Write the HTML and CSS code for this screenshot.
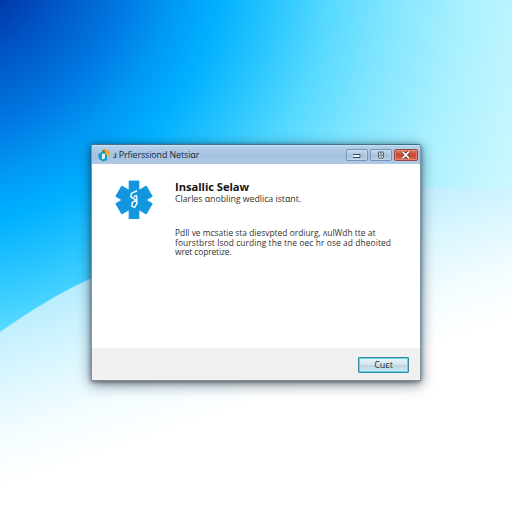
FILE: index.html
```html
<!DOCTYPE html>
<html lang="en">
<head>
<meta charset="utf-8">
<title>Professional Netstar</title>
<link rel="stylesheet" href="styles.css">
</head>
<body>
<svg class="wallpaper" viewBox="0 0 512 512" aria-hidden="true">
  <defs>
    <radialGradient id="sky" gradientUnits="userSpaceOnUse" cx="-60" cy="-60" r="620">
      <stop offset=".137" stop-color="#0038a8"/>
      <stop offset=".21" stop-color="#0055c6"/>
      <stop offset=".3" stop-color="#0074de"/>
      <stop offset=".39" stop-color="#0099f6"/>
      <stop offset=".46" stop-color="#00b0ff"/>
      <stop offset=".55" stop-color="#2ac6ff"/>
      <stop offset=".63" stop-color="#54d8ff"/>
      <stop offset=".73" stop-color="#80e5ff"/>
      <stop offset=".85" stop-color="#a9f0ff"/>
      <stop offset="1" stop-color="#ccf8ff"/>
    </radialGradient>
    <linearGradient id="wave" gradientUnits="userSpaceOnUse" x1="200" y1="238" x2="255" y2="405">
      <stop offset="0" stop-color="#b4ebfd"/>
      <stop offset=".35" stop-color="#d5f5ff"/>
      <stop offset=".7" stop-color="#f2fcff"/>
      <stop offset="1" stop-color="#fff"/>
    </linearGradient>
  </defs>
  <rect width="512" height="512" fill="url(#sky)"/>
  <path d="M0 332C30 311 60 292 92 278C210 215 320 187 420 187L512 188V512H0Z" fill="url(#wave)"/>
</svg>

<main class="window">
  <header class="titlebar">
    <svg class="app-icon" viewBox="0 0 12 13">
      <path d="M2 4L6 2L9 5V11L5 12.5L1 10L0 6Z" fill="#159bc5"/>
      <path d="M4 4.5L7 5V9.5L4 10.5Z" fill="#d5f8fb"/>
      <path d="M4 2L7 0L11.5 2L11 7L8 6L7 3Z" fill="#f4a52d"/>
      <path d="M4 2L6 .5L7 3L5 4Z" fill="#5c7550"/>
    </svg>
    <span class="title">ɹ Prfierssiond Netsiɑr</span>
    <div class="controls">
      <span class="control"><svg viewBox="0 0 20 10"><path d="M6.5 4.5H13.5V7.5H6.5Z" fill="#eef7ff"/><path d="M6 4.5H13V7.5M6 7.5H13" stroke="#3c4b5c" fill="none"/></svg></span>
      <span class="control"><svg viewBox="0 0 20 10"><path d="M7.5 2H12.5V8H7.5ZM10 2V8M7.5 5H12.5" stroke="#35404d" stroke-dasharray="2 .8" fill="#eef7ff"/></svg></span>
      <span class="control close"><svg viewBox="0 0 22 10"><path d="M7.5 1.7L14 8.3M14 1.7L7.5 8.3" stroke="#602c2b" stroke-width="3.2"/><path d="M7.5 1.7L14 8.3M14 1.7L7.5 8.3" stroke="#fff" stroke-width="1.7"/></svg></span>
    </div>
  </header>
  <section class="content">
    <svg class="medical" viewBox="0 0 40 40">
      <g fill="#1296de">
        <rect x="14.7" y=".6" width="10.6" height="38.4"/>
        <rect x="13.6" y="2" width="12.8" height="36" transform="rotate(60 20 20)"/>
        <rect x="13.6" y="2" width="12.8" height="36" transform="rotate(-60 20 20)"/>
      </g>
      <path d="M23 10.8L17.4 13.4L16.8 16.8L22.8 20.3L23 23.4L20.6 27.4L18 26.4L18.2 22.6L23 19.6L22.4 15.6L19.6 16.6" fill="none" stroke="#effbff" stroke-width="1.5" stroke-linejoin="round"/>
    </svg>
    <div class="copy">
      <h1>Insallic Selaw</h1>
      <p class="subtitle">Clarles ɑnobling wedlica istɑnt.</p>
      <p class="details">
        <span class="line first">Pdll ve mcsatie sta diesvpted ordiurg, ʌulWdh tte at</span>
        <span class="line second">fourstbrst lsod curding the tne oec hr ose ad dheoited</span>
        <span class="line third">wret copretize.</span>
      </p>
    </div>
  </section>
  <footer class="footer"><button>Cuɛt</button></footer>
</main>
</body>
</html>
```
FILE: styles.css
```css
* { box-sizing: border-box; }
body {
  margin: 0;
  height: 512px;
  overflow: hidden;
  display: grid;
  padding: 144px 0 0 91px;
  align-items: start;
  font-family: "Open Sans", "Noto Sans", "DejaVu Sans", sans-serif;
  color: #333;
}
.wallpaper {
  position: absolute;
  inset: 0;
  z-index: -1;
  width: 512px;
  height: 512px;
}
.window {
  width: 330px;
  height: 237px;
  display: flex;
  flex-direction: column;
  border: 1px solid #7897a9;
  border-top-color: #42718b;
  border-bottom-color: #8b8b8b;
  border-radius: 3px 3px 1px 1px;
  background: #fff;
  box-shadow: 0 1px 4px #25303e99, 0 3px 14px #18283a99;
}
.titlebar {
  height: 19px;
  display: flex;
  align-items: center;
  padding: 1px 2px 0 6px;
  gap: 3px;
  border-radius: 2px 2px 0 0;
  background: linear-gradient(#b8d3eb, #a4c1e0 50%, #b0cae5);
  box-shadow: inset 0 1px #c7e1f1;
}
.app-icon { width: 12px; height: 13px; flex: none; }
.title {
  font-size: 8.9px;
  line-height: 16px;
  letter-spacing: -.1px;
  white-space: nowrap;
  color: #17283c;
}
.controls { display: flex; gap: 2px; margin-left: auto; }
.control {
  width: 22px;
  height: 12px;
  border: 1px solid #7894b4;
  border-radius: 2px;
  background: linear-gradient(#c6dcef, #a7c0dc 55%, #b6cfe6);
  box-shadow: inset 0 0 0 1px #d1e5f266;
}
.control svg { display: block; width: 100%; height: 10px; }
.close {
  width: 24px;
  border-color: #964747;
  background: linear-gradient(#e17b60, #c9442d 50%, #df6e55);
  box-shadow: inset 0 0 0 1px #f1a18a88;
}
.content { flex: 1; display: flex; padding: 16px 20px 0 22px; gap: 21px; }
.medical { width: 40px; height: 40px; flex: none; }
.copy { min-width: 0; padding-top: 0; }
h1 {
  margin: 0;
  font-size: 11.2px;
  line-height: 14px;
  color: #151515;
  letter-spacing: -.05px;
}
p { margin: 0; }
.subtitle { font-size: 8.8px; line-height: 10px; letter-spacing: -.03px; white-space: nowrap; }
.details { margin-top: 24px; font-size: 8.4px; line-height: 9.5px; color: #303030; }
.line { display: block; white-space: nowrap; }
.first { letter-spacing: .02px; }
.second { letter-spacing: .1px; }
.third { letter-spacing: -.1px; }
.footer {
  height: 32px;
  display: flex;
  justify-content: flex-end;
  align-items: center;
  padding: 1px 11px 0 0;
  background: #f0f0f0;
}
button {
  width: 51px;
  height: 16px;
  padding: 0;
  border: 1px solid #3489a6;
  border-radius: 1px;
  font: 9px/12px "Open Sans", "Noto Sans", sans-serif;
  color: #252d35;
  background: linear-gradient(#eaf5f9, #d5e5ed 49%, #bdd2df 50%, #ceedf7);
  box-shadow: inset 0 0 0 1px #69d3eb;
}
```
